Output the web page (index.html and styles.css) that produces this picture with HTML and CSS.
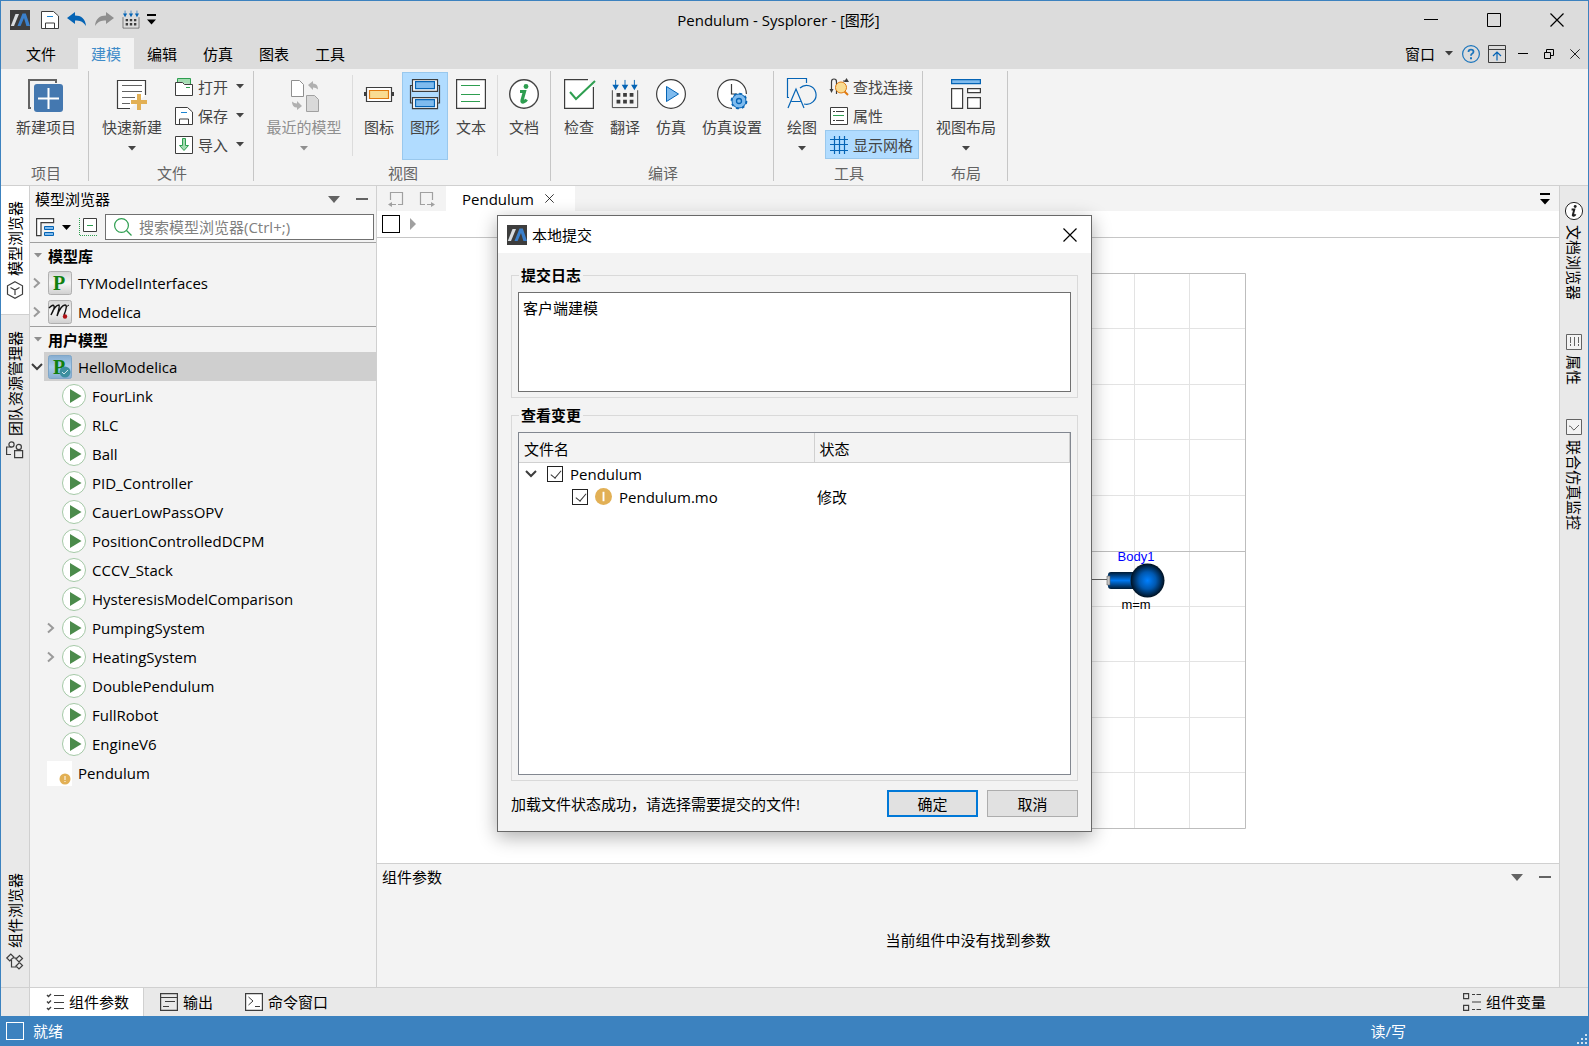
FILE: index.html
```html
<!DOCTYPE html>
<html lang="zh-CN">
<head>
<meta charset="utf-8">
<title>Pendulum - Sysplorer - [图形]</title>
<link rel="stylesheet" href="styles.css">
</head>
<body>
<svg class="defs" aria-hidden="true">
  <defs>
    <linearGradient id="g-key" x1="0" y1="0" x2="0" y2="1"><stop offset="0" stop-color="#d6d6d6"/><stop offset=".5" stop-color="#f4f4f4"/><stop offset="1" stop-color="#cfcfcf"/></linearGradient>
    <linearGradient id="g-keyblue" x1="0" y1="0" x2="0" y2="1"><stop offset="0" stop-color="#86add0"/><stop offset=".5" stop-color="#a9cdec"/><stop offset="1" stop-color="#86add0"/></linearGradient>
    <linearGradient id="g-rod" x1="0" y1="0" x2="0" y2="1"><stop offset="0" stop-color="#001a33"/><stop offset=".5" stop-color="#0078f0"/><stop offset="1" stop-color="#001a33"/></linearGradient>
    <radialGradient id="g-ball"><stop offset="0" stop-color="#0080ff"/><stop offset=".5" stop-color="#0058b0"/><stop offset="1" stop-color="#00101f"/></radialGradient>
  </defs>
  <symbol id="i-logo" viewBox="0 0 20 20"><path fill="#3d3d3d" d="M0 0h20v20H0z"/><path fill="#d9dde0" d="M5.500 4H9L4 16H0.800z"/><path fill="#3a80cc" d="M12.500 3.500h3.300L20 16h-3.600L14 8l-3.400 8H7.500z"/></symbol>
  <symbol id="i-save" viewBox="0 0 18 18"><path fill="#fff" stroke="#3d3d3d" d="M.5 .5h12l5 4.500v12.500H.5z"/><path fill="none" stroke="#3d3d3d" d="M4.500 17v-5h9v5"/><path stroke="#1b83d0" d="M6 5.500h6"/></symbol>
  <symbol id="i-undo" viewBox="0 0 20 16"><path fill="currentColor" d="M0 6L8 0v3.500c6 0 10.500 3 11 10.500C16 9.500 13 8.500 8 8.500V12z"/></symbol>
  <symbol id="i-build" viewBox="0 0 30 32"><path fill="none" stroke="#3d3d3d" d="M1.500 12v18.500h27V12"/><path stroke="#0564b5" d="M5 1v6M15 1v6M25 1v6"/><path fill="#0564b5" d="M1.500 6h7L5 12zM11.500 6h7L15 12zM21.500 6h7L25 12z"/><path fill="#3d3d3d" d="M6 15h4v4H6zM13 15h4v4h-4zM20 15h4v4h-4zM6 22h4v4H6zM13 22h4v4h-4zM20 22h4v4h-4z"/></symbol>
  <symbol id="i-down" viewBox="0 0 8 5"><path fill="currentColor" d="M0 0h8L4 4.500z"/></symbol>
  <symbol id="i-more" viewBox="0 0 10 12"><path fill="currentColor" d="M0 0h10v2H0zM0 6h10l-5 5.500z"/></symbol>
  <symbol id="i-minus" viewBox="0 0 12 12"><path fill="currentColor" d="M0 5h12v2H0z"/></symbol>
  <symbol id="i-x" viewBox="0 0 14 14"><path fill="none" stroke="currentColor" stroke-width="1.200" d="M.5 .5l13 13M13.500 .5l-13 13"/></symbol>
  <symbol id="i-right" viewBox="0 0 8 12"><path fill="none" stroke="currentColor" stroke-width="2" d="M1 1.500L6 6l-5 4.500"/></symbol>
  <symbol id="i-open" viewBox="0 0 12 8"><path fill="none" stroke="currentColor" stroke-width="2" d="M1 1l5 5 5-5"/></symbol>
  <symbol id="i-run" viewBox="0 0 24 24"><circle cx="12" cy="12" r="11.500" fill="#fff" stroke="#a4c8a6"/><path fill="#4b8b4b" d="M8 5l11.500 7L8 19z"/></symbol>
  <symbol id="i-warn" viewBox="0 0 18 18"><circle cx="9" cy="9" r="9" fill="#e2b055"/><path fill="#fff" d="M8 4h2v10H8z"/></symbol>
  <symbol id="i-info" viewBox="0 0 30 30"><circle cx="15" cy="15" r="14.300" fill="#fff" stroke="currentColor" stroke-width="1.400"/><circle cx="17" cy="7.500" r="2.400" fill="var(--mark)"/><path fill="none" stroke="var(--mark)" stroke-width="3.200" d="M11 12.500h4.500L13 21.500q-.4 1.800 1.500 1.500 2-.5 3-2.500"/></symbol>
</svg>

<div class="window">
  <header class="titlebar">
    <div class="quick">
      <svg class="logo"><use href="#i-logo"/></svg>
      <button class="quick-btn" aria-label="保存"><svg width="18" height="18"><use href="#i-save"/></svg></button>
      <button class="quick-btn blue" aria-label="撤销"><svg width="20" height="16"><use href="#i-undo"/></svg></button>
      <button class="quick-btn gray" aria-label="重做"><svg class="flip" width="20" height="16"><use href="#i-undo"/></svg></button>
      <button class="quick-btn" aria-label="翻译"><svg width="18" height="19"><use href="#i-build"/></svg></button>
      <button class="quick-btn slim" aria-label="更多"><svg width="9" height="11"><use href="#i-more"/></svg></button>
    </div>
    <h1 class="caption">Pendulum - Sysplorer - [图形]</h1>
    <div class="win-controls">
      <button aria-label="最小化"><svg width="14" height="14"><path fill="#000" d="M0 6h14v1H0z"/></svg></button>
      <button aria-label="最大化"><svg width="14" height="14"><path fill="none" stroke="#000" d="M.5 .5h13v13H.5z"/></svg></button>
      <button aria-label="关闭"><svg width="14" height="14"><use href="#i-x"/></svg></button>
    </div>
  </header>

  <nav class="menubar">
    <button class="menu file">文件</button>
    <button class="menu active">建模</button>
    <button class="menu">编辑</button>
    <button class="menu">仿真</button>
    <button class="menu">图表</button>
    <button class="menu">工具</button>
    <div class="menu-right">
      <button class="window-menu">窗口<svg class="drop"><use href="#i-down"/></svg></button>
      <button class="mini" aria-label="帮助"><svg width="18" height="18"><circle cx="9" cy="9" r="8.400" fill="none" stroke="#1b75bc" stroke-width="1.200"/><path fill="none" stroke="#1b75bc" stroke-width="1.800" d="M6.500 7q0-2.300 2.500-2.300t2.500 2.100Q11.500 8 10 8.800q-1 .5-1 2"/><path fill="#1b75bc" d="M8 12.300h2v2H8z"/></svg></button>
      <button class="mini" aria-label="折叠功能区"><svg width="18" height="18"><path fill="none" stroke="#3d3d3d" d="M.5 .5h17v17H.5zM.5 4.500h17"/><path fill="none" stroke="#0564b5" stroke-width="1.200" d="M9 15.500V8M5 11l4-4 4 4"/></svg></button>
      <button class="mini" aria-label="最小化子窗口"><svg width="10" height="10"><path d="M0 4h10v1H0z"/></svg></button>
      <button class="mini" aria-label="还原子窗口"><svg width="10" height="10"><path fill="none" stroke="#000" d="M.5 3.500h6v6h-6zM2.500 3V.5h7v6H7"/></svg></button>
      <button class="mini" aria-label="关闭子窗口"><svg width="10" height="10"><use href="#i-x"/></svg></button>
    </div>
  </nav>

  <section class="ribbon">
    <div class="group">
      <div class="tools">
        <button class="tool wide"><svg class="pic"><path fill="none" stroke="#636363" stroke-width="2" d="M-2 29V1h27v3M-3 29h3"/><rect x="3" y="5" width="29" height="28" rx="3" fill="#4478b0"/><path fill="#fff" d="M16.500 9h2v9.500H28v2h-9.500V30h-2v-9.500H7v-2h9.500z"/></svg>新建项目</button>
      </div>
      <h2>项目</h2>
    </div>
    <div class="group">
      <div class="tools">
        <button class="tool wide"><svg class="pic"><path fill="#fff" stroke="#3d3d3d" stroke-width="1.200" d="M28.500 16V1.500h-28v28H13"/><path stroke="#636363" d="M5 6.500h20M5 12.500h20M5 18.500h13M5 24.500h8"/><path fill="#e2b055" d="M20 15h4v6h6v4h-6v6h-4v-6h-6v-4h6z"/></svg>快速新建<svg class="drop"><use href="#i-down"/></svg></button>
        <div class="stack">
          <button class="row"><svg class="pic18"><path fill="#a3dcb1" stroke="#2e9e50" d="M2.500 5V.5h13V6"/><path fill="#fff" stroke="#3d3d3d" d="M.5 4.500h7l2 2h8v11H.5z"/><path stroke="#2e9e50" d="M11 9.500h4"/></svg>打开<svg class="drop"><use href="#i-down"/></svg></button>
          <button class="row"><svg class="pic18"><use href="#i-save"/></svg>保存<svg class="drop"><use href="#i-down"/></svg></button>
          <button class="row"><svg class="pic18"><path fill="#fff" stroke="#3d3d3d" d="M.5 .5h17v17H.5z"/><path fill="#a3dcb1" stroke="#2e9e50" d="M7.500 2.500h3v7h3L9 14.500 4.500 9.500h3z"/></svg>导入<svg class="drop"><use href="#i-down"/></svg></button>
        </div>
      </div>
      <h2>文件</h2>
    </div>
    <div class="group">
      <div class="tools">
        <button class="tool recent" disabled><svg class="pic"><path fill="#fff" stroke="#8f8f8f" d="M2.500 1.500h8l4 4v12h-12z"/><path fill="#d9d9d9" stroke="#a0a0a0" d="M17.500 16.500h8l4 4v12h-12z"/><path fill="#b0b0b0" d="M19 6l5-4v2.500q5 0 5 6-2-2-5-2V11zM13 27l-5 4v-2.500q-5 0-5-6 2 2 5 2V22z"/></svg>最近的模型<svg class="drop"><use href="#i-down"/></svg></button>
        <span class="rule"></span>
        <button class="tool"><svg class="pic"><path fill="#3d3d3d" d="M0 13h3v4H0zM27 13h3v4h-3z"/><path fill="#fff" stroke="#3d3d3d" stroke-width="1.200" d="M2.500 8.500h25v14h-25z"/><path fill="#f9dc92" stroke="#e07a10" stroke-width="1.200" d="M5.500 11.500h19v8h-19z"/></svg>图标</button>
        <button class="tool on"><svg class="pic"><path fill="none" stroke="#3d3d3d" stroke-width="1.200" d="M3 6.500H.5V24H3M27 6.500h2.500V24H27"/><path fill="#fff" stroke="#3d3d3d" stroke-width="1.200" d="M2.500 .6h25v11.800h-25zM2.500 18.600h25v11h-25z"/><path fill="#7fbbee" stroke="#0564b5" stroke-width="1.200" d="M5.500 2.600h19v7h-19zM5.500 20.600h19v7h-19z"/></svg>图形</button>
        <button class="tool"><svg class="pic"><path fill="#fff" stroke="#3d3d3d" stroke-width="1.200" d="M.6 .6h28.800v28.800H.6z"/><path stroke="#2e9e50" d="M5 6.500h19M5 15.500h19M5 22.500h19"/></svg>文本</button>
        <span class="rule"></span>
        <button class="tool"><svg class="pic green-mark"><use href="#i-info"/></svg>文档</button>
      </div>
      <h2>视图</h2>
    </div>
    <div class="group">
      <div class="tools">
        <button class="tool"><svg class="pic"><path fill="#fff" stroke="#3d3d3d" stroke-width="1.200" d="M24 .6H.6v28.800h28.800V8"/><path fill="none" stroke="#2e9e50" stroke-width="2" d="M6 13l6 7L31 2"/></svg>检查</button>
        <button class="tool"><svg class="pic"><use href="#i-build"/></svg>翻译</button>
        <button class="tool"><svg class="pic"><circle cx="15" cy="15" r="14.400" fill="#fff" stroke="#3d3d3d" stroke-width="1.200"/><path fill="#7fbbee" stroke="#0564b5" d="M10.500 7.500v15l12-7.500z"/></svg>仿真</button>
        <button class="tool wide"><svg class="pic"><path fill="#fff" stroke="#3d3d3d" stroke-width="1.200" d="M15 29.400A14.400 14.400 0 1 1 29.400 15"/><path fill="none" stroke="#3d3d3d" stroke-width="1.200" d="M14.500 5v10H20"/><circle cx="22" cy="22" r="7" fill="#7fbbee" stroke="#0564b5"/><circle cx="22" cy="22" r="7.600" fill="none" stroke="#0564b5" stroke-width="1.500" stroke-dasharray="3 2.970"/><circle cx="22" cy="22" r="2.500" fill="none" stroke="#0564b5" stroke-width="1.300"/></svg>仿真设置</button>
      </div>
      <h2>编译</h2>
    </div>
    <div class="group">
      <div class="tools">
        <button class="tool"><svg class="pic"><path fill="none" stroke="#0564b5" stroke-width="1.200" d="M2 18.500H.5V-.5h19V4M1 29l8-19 8 19M4.500 22.500h9M13 9a9.500 9.500 0 1 1 4 16"/></svg>绘图<svg class="drop"><use href="#i-down"/></svg></button>
        <div class="stack">
          <button class="row"><svg class="pic18"><path fill="none" stroke="#3d3d3d" stroke-width="1.200" d="M1.500 12V4q0-3 2.500-3t2.500 3v12M13 3h4"/><path fill="#3d3d3d" d="M-.5 11h4l-2 4zM14 4h5l-2.500-4z"/><path stroke="#e07a10" stroke-width="2" d="M14 13l4 4"/><circle cx="11" cy="9.500" r="5.500" fill="#f9dc92" stroke="#e07a10"/></svg>查找连接</button>
          <button class="row"><svg class="pic18"><path fill="#fff" stroke="#3d3d3d" d="M.5 .5h17v17H.5z"/><path stroke="#3d3d3d" d="M3 4.500h2M6 4.500h8M3 13.500h2M6 13.500h8"/><path stroke="#2e9e50" d="M3 8.500h11"/></svg>属性</button>
          <button class="row on"><svg class="pic18"><path stroke="#0564b5" stroke-width="1.200" d="M4.500 0v18M9.500 0v18M14.500 0v18M0 3.500h18M0 8.500h18M0 14.500h18"/></svg>显示网格</button>
        </div>
      </div>
      <h2>工具</h2>
    </div>
    <div class="group">
      <div class="tools">
        <button class="tool wide"><svg class="pic"><path fill="#7fbbee" stroke="#0564b5" stroke-width="1.200" d="M.6 .6h28.800v4H.6z"/><path fill="#fff" stroke="#3d3d3d" stroke-width="1.200" d="M.6 9.600h11v19.800H.6zM16.600 9.600h12.800v4H16.600zM16.600 18.600h12.800v10.800H16.600z"/></svg>视图布局<svg class="drop"><use href="#i-down"/></svg></button>
      </div>
      <h2>布局</h2>
    </div>
  </section>

  <div class="workspace">
    <nav class="strip left">
      <button class="side-tab active"><svg width="18" height="18"><path fill="none" stroke="#3d3d3d" stroke-width="1.200" d="M9 .8l7.500 4v8.400L9 17.200l-7.500-4V4.800zM4.500 6.500L9 9l4.500-2.500M9 9v5"/></svg><span>模型浏览器</span></button>
      <button class="side-tab"><svg width="18" height="18"><path fill="none" stroke="#3d3d3d" stroke-width="1.200" d="M5 13.500H.6V6h5M8.600 9.600h8v7h-8z"/><circle cx="5.500" cy="3.500" r="2.600" fill="none" stroke="#3d3d3d" stroke-width="1.200"/><circle cx="12.800" cy="6" r="2.600" fill="none" stroke="#3d3d3d" stroke-width="1.200"/></svg><span>团队资源管理器</span></button>
      <button class="side-tab last"><svg width="18" height="18"><path fill="none" stroke="#3d3d3d" stroke-width="1.200" d="M.8 5l4-4 3 3-4 4zM10 6l3.500-3.500 3 3L13 9zM10 13l3.500-3.500 3 3L13 16zM7 5h4M5.500 7v7H11"/></svg><span>组件浏览器</span></button>
    </nav>

    <aside class="browser">
      <div class="panel-head">
        <h2>模型浏览器</h2>
        <button aria-label="选项"><svg width="12" height="7"><path fill="#636363" d="M0 0h12L6 7z"/></svg></button>
        <button aria-label="收起"><svg width="12" height="12"><use href="#i-minus"/></svg></button>
      </div>
      <div class="search-bar">
        <button class="view-btn" aria-label="视图"><svg width="18" height="18"><path fill="#fff" stroke="#3d3d3d" stroke-width="1.200" d="M.6 .6h17v4H5v13H.6z"/><path fill="#7fbbee" stroke="#0564b5" d="M8.500 8.500h9v3h-9zM8.500 14.500h9v3h-9z"/></svg><svg width="9" height="5"><path d="M0 0h9L4.500 5z"/></svg></button>
        <button aria-label="全部折叠"><svg width="18" height="18"><path fill="none" stroke="#2e9e50" stroke-dasharray="1 1" d="M.5 0v17.500H18"/><path fill="#fff" stroke="#3d3d3d" d="M4.500 .5h13v13h-13z"/><path stroke="#2e9e50" d="M8 7.500h6"/></svg></button>
        <label class="search"><svg width="18" height="18"><circle cx="7.500" cy="7.500" r="6.900" fill="none" stroke="#2e9e50" stroke-width="1.200"/><path stroke="#2e9e50" stroke-width="1.300" d="M12.500 12.500l5 5"/></svg><input type="text" placeholder="搜索模型浏览器(Ctrl+;)" aria-label="搜索模型浏览器"></label>
      </div>
      <section class="tree">
        <h3><svg class="drop"><use href="#i-down"/></svg>模型库</h3>
        <ul>
          <li><span class="twist"><svg width="8" height="12"><use href="#i-right"/></svg></span><svg class="node"><rect x=".5" y=".5" width="23" height="23" rx="2" fill="url(#g-key)" stroke="#b0b0b0"/><text class="p-mark" x="11" y="19">P</text></svg>TYModelInterfaces</li>
          <li><span class="twist"><svg width="8" height="12"><use href="#i-right"/></svg></span><svg class="node"><rect x=".5" y=".5" width="23" height="23" rx="2" fill="url(#g-key)" stroke="#b0b0b0"/><path fill="none" stroke="#111" stroke-width="1.400" d="M1 8q4-4 5-2T3 15q4-10 8-10 1 1-2 11 4-11 8-11 3 0-1 10"/><path fill="none" stroke="#111" d="M18 7l3-2"/><circle cx="17" cy="16.500" r="2.200" fill="#b01217"/></svg>Modelica</li>
        </ul>
      </section>
      <section class="tree">
        <h3><svg class="drop"><use href="#i-down"/></svg>用户模型</h3>
        <ul>
          <li class="selected"><span class="twist dark"><svg width="12" height="8"><use href="#i-open"/></svg></span><svg class="node"><rect x=".5" y=".5" width="23" height="23" rx="2" fill="url(#g-keyblue)" stroke="#7fa6c8"/><text class="p-mark" x="11" y="19">P</text><circle cx="17" cy="17" r="5.500" fill="#3c8f9f"/><path fill="none" stroke="#cfe6ea" d="M14 17l2 2 4-4"/></svg>HelloModelica</li>
          <li class="sub"><span class="twist"></span><svg class="node"><use href="#i-run"/></svg>FourLink</li>
          <li class="sub"><span class="twist"></span><svg class="node"><use href="#i-run"/></svg>RLC</li>
          <li class="sub"><span class="twist"></span><svg class="node"><use href="#i-run"/></svg>Ball</li>
          <li class="sub"><span class="twist"></span><svg class="node"><use href="#i-run"/></svg>PID_Controller</li>
          <li class="sub"><span class="twist"></span><svg class="node"><use href="#i-run"/></svg>CauerLowPassOPV</li>
          <li class="sub"><span class="twist"></span><svg class="node"><use href="#i-run"/></svg>PositionControlledDCPM</li>
          <li class="sub"><span class="twist"></span><svg class="node"><use href="#i-run"/></svg>CCCV_Stack</li>
          <li class="sub"><span class="twist"></span><svg class="node"><use href="#i-run"/></svg>HysteresisModelComparison</li>
          <li class="sub"><span class="twist"><svg width="8" height="12"><use href="#i-right"/></svg></span><svg class="node"><use href="#i-run"/></svg>PumpingSystem</li>
          <li class="sub"><span class="twist"><svg width="8" height="12"><use href="#i-right"/></svg></span><svg class="node"><use href="#i-run"/></svg>HeatingSystem</li>
          <li class="sub"><span class="twist"></span><svg class="node"><use href="#i-run"/></svg>DoublePendulum</li>
          <li class="sub"><span class="twist"></span><svg class="node"><use href="#i-run"/></svg>FullRobot</li>
          <li class="sub"><span class="twist"></span><svg class="node"><use href="#i-run"/></svg>EngineV6</li>
          <li><span class="twist"></span><svg class="node"><path fill="#fff" d="M-1 0h25v25H-1z"/><circle cx="17" cy="18" r="5.500" fill="#e2b055"/><path fill="#fff" d="M16.500 15h1v4h-1zM16.500 20h1v1h-1z"/></svg>Pendulum</li>
        </ul>
      </section>
    </aside>

    <main class="editor">
      <div class="doc-tabs">
        <div class="nav-btns">
          <button aria-label="后退"><svg width="16" height="16"><path fill="none" stroke="#a0a0a0" stroke-width="1.200" d="M2.500 9V1.500h12v12H10M8 13.500H2"/><path fill="#a0a0a0" d="M0 13.500l4-2.500v5z"/></svg></button>
          <button aria-label="前进"><svg width="16" height="16"><path fill="none" stroke="#a0a0a0" stroke-width="1.200" d="M13.500 9V1.500h-12v12H6M8 13.500h6"/><path fill="#a0a0a0" d="M16 13.500L12 11v5z"/></svg></button>
        </div>
        <div class="doc-tab">Pendulum<button aria-label="关闭标签"><svg width="9" height="9"><use href="#i-x"/></svg></button></div>
        <button class="all-tabs" aria-label="全部标签"><svg width="10" height="12"><use href="#i-more"/></svg></button>
      </div>
      <div class="crumbs"><span class="box"></span><svg width="6" height="12"><path fill="#a0a0a0" d="M0 0v12l6-6z"/></svg></div>
      <div class="canvas">
        <svg class="sheet" width="556" height="556">
          <path fill="none" stroke="#e3e3e3" d="M55.500 0v556M111.500 0v556M166.500 0v556M222.500 0v556M333.500 0v556M388.500 0v556M444.500 0v556M499.500 0v556M0 55.500h556M0 111.500h556M0 166.500h556M0 222.500h556M0 333.500h556M0 388.500h556M0 444.500h556M0 499.500h556"/>
          <path fill="none" stroke="#bdbdbd" d="M.5 .5h555v555H.5zM277.500 0v556M0 278.500h556"/>
          <path stroke="#636363" d="M360 306.500h58"/>
          <rect x="418" y="299" width="32" height="17" rx="3" fill="url(#g-rod)"/>
          <path fill="#c8c8c8" stroke="#636363" stroke-width=".6" d="M417 303h3v9h-3z"/>
          <circle cx="457.500" cy="307.500" r="17" fill="url(#g-ball)"/>
          <text class="part blue-text" x="446" y="288">Body1</text>
          <text class="part" x="446" y="336">m=m</text>
        </svg>
      </div>
      <section class="params">
        <div class="panel-head">
          <h2>组件参数</h2>
          <button aria-label="选项"><svg width="12" height="7"><path fill="#636363" d="M0 0h12L6 7z"/></svg></button>
          <button aria-label="收起"><svg width="12" height="12"><use href="#i-minus"/></svg></button>
        </div>
        <p>当前组件中没有找到参数</p>
      </section>
    </main>

    <nav class="strip right">
      <button class="side-tab"><svg class="dark-mark" width="18" height="18"><use href="#i-info"/></svg><span>文档浏览器</span></button>
      <button class="side-tab"><svg width="16" height="16"><path fill="#f3f3f3" stroke="#636363" d="M.5 .5h15v15H.5z"/><path stroke="#636363" d="M4.500 3v6M4.500 10v2M8.500 3v9M12.500 3v6M12.500 10v2"/></svg><span>属性</span></button>
      <button class="side-tab"><svg width="16" height="16"><path fill="#f3f3f3" stroke="#636363" d="M.5 .5h15v15H.5z"/><path fill="none" stroke="#636363" d="M3 7q2 0 3 2t2 2l5-5"/></svg><span>联合仿真监控</span></button>
    </nav>
  </div>

  <nav class="bottom-tabs">
    <span class="corner"></span>
    <button class="btab active"><svg width="18" height="18"><path stroke="#3d3d3d" stroke-width="1.200" d="M8 2.500h10M8 9.500h10M8 15.500h10"/><path fill="none" stroke="#3d3d3d" stroke-width="1.400" d="M1 2l1.500 1.500L5 1M1 8.500L2.500 10 5 7.500M1 15l1.500 1.500L5 14"/></svg>组件参数</button>
    <button class="btab"><svg width="18" height="18"><path fill="none" stroke="#3d3d3d" stroke-width="1.200" d="M.6 .6h16.800v16.800H.6zM1 4.500h16M5 8.500h10M3 13.500h6"/></svg>输出</button>
    <button class="btab"><svg width="18" height="18"><path fill="#fff" stroke="#3d3d3d" stroke-width="1.200" d="M.6 .6h16.800v16.800H.6z"/><path fill="none" stroke="#3d3d3d" d="M3.500 4l4.500 4-4.500 4M10 13.500h5"/></svg>命令窗口</button>
    <button class="btab end"><svg width="18" height="18"><path fill="none" stroke="#3d3d3d" stroke-width="1.200" d="M.6 .6h5v5h-5zM.6 12.400h5v5h-5zM9 1.500h3M13.500 1.500H18M9 9h9M9 16.500h3M13.500 16.500H18"/></svg>组件变量</button>
  </nav>

  <footer class="status">
    <span class="status-box"></span>
    <span class="ready">就绪</span>
    <span class="mode">读/写</span>
    <svg class="grip" width="12" height="12"><path fill="#d3e3f1" d="M9 0h2v2H9zM9 4h2v2H9zM9 8h2v2H9zM5 4h2v2H5zM5 8h2v2H5zM1 8h2v2H1z"/></svg>
  </footer>

  <div class="overlay">
    <form class="dialog" role="dialog" aria-labelledby="dlg-title">
      <header>
        <svg class="logo"><use href="#i-logo"/></svg>
        <h2 id="dlg-title">本地提交</h2>
        <button type="button" aria-label="关闭"><svg width="14" height="14"><use href="#i-x"/></svg></button>
      </header>
      <div class="dialog-body">
        <fieldset>
          <legend>提交日志</legend>
          <textarea aria-label="提交日志">客户端建模</textarea>
        </fieldset>
        <fieldset>
          <legend>查看变更</legend>
          <div class="changes">
            <table>
              <thead><tr><th class="name-col">文件名</th><th>状态</th></tr></thead>
              <tbody>
                <tr><td><div class="file"><svg class="fold" width="12" height="8"><use href="#i-open"/></svg><label><input type="checkbox" checked>Pendulum</label></div></td><td></td></tr>
                <tr><td><div class="file child"><label><input type="checkbox" checked><svg width="17" height="17"><use href="#i-warn"/></svg>Pendulum.mo</label></div></td><td>修改</td></tr>
              </tbody>
            </table>
          </div>
        </fieldset>
        <div class="actions">
          <p>加载文件状态成功，请选择需要提交的文件!</p>
          <button type="button" class="push primary">确定</button>
          <button type="button" class="push">取消</button>
        </div>
      </div>
    </form>
  </div>
</div>
</body>
</html>
```
FILE: styles.css
```css
:root {
  --blue: #3c82bf;
  --panel: #f3f3f3;
  --strip: #e9e9e9;
  --line: #d0d0d0;
  --ink: #3d3d3d;
  --hot: #b1dcff;
  --hot-line: #99c8ed;
}

* { box-sizing: border-box; }

body {
  margin: 0;
  color: #000;
  font: 15px/20px "Open Sans", "Noto Sans CJK SC", sans-serif;
}

button, input, textarea { font: inherit; color: inherit; }

button {
  display: flex;
  align-items: center;
  justify-content: center;
  padding: 0;
  border: 0;
  background: none;
  white-space: nowrap;
}

h1, h2, h3, p, ul { margin: 0; padding: 0; font-size: 15px; font-weight: 400; }
ul { list-style: none; }
svg { display: block; flex: none; overflow: visible; }

.defs { position: absolute; width: 0; height: 0; }
.drop { width: 8px; height: 5px; }
.logo { width: 20px; height: 20px; }
.flip { transform: scaleX(-1); }
.green-mark { --mark: #2e9e50; }
.dark-mark { --mark: #222; }

.window {
  position: relative;
  display: flex;
  flex-direction: column;
  min-height: 100vh;
  border: 1px solid var(--blue);
  border-bottom: 0;
  background: var(--panel);
}

/* Title bar */
.titlebar { display: flex; align-items: center; height: 37px; background: #dcdcdc; }
.quick { display: flex; align-items: center; padding-left: 9px; }
.quick .logo { margin-right: 6px; }
.quick-btn { width: 27px; height: 24px; }
.quick-btn.slim { width: 14px; }
.blue { color: #0564b5; }
.gray { color: #8f8f8f; }
.caption { flex: 1; text-align: center; }
.win-controls { display: flex; }
.win-controls button { width: 63px; height: 36px; }

/* Menu bar */
.menubar { display: flex; height: 31px; background: #dcdcdc; }
.menu { width: 56px; }
.menu.file { width: 77px; }
.menu.active { background: var(--panel); color: #3f8cc9; }
.menu-right { display: flex; align-items: center; margin-left: auto; }
.window-menu { gap: 10px; margin-right: 5px; }
.window-menu .drop { color: var(--ink); }
.mini { width: 26px; height: 26px; }

/* Ribbon */
.ribbon {
  display: flex;
  padding: 2px 0 4px;
  border-bottom: 1px solid var(--line);
  color: #444;
}
.group { padding: 1px 3px 0 5px; border-right: 1px solid #c6c6c6; }
.group:first-child { padding-right: 4px; padding-left: 7px; }
.group h2 { padding-top: 5px; color: #636363; line-height: 16px; text-align: center; }
.tools { display: flex; height: 88px; }
.tool {
  flex-direction: column;
  justify-content: flex-start;
  width: 46px;
  height: 88px;
  padding-top: 6px;
  border: 1px solid transparent;
}
.tool.wide { width: 76px; }
.tool.recent { width: 90px; color: #8f8f8f; }
.tool .pic { margin-bottom: 8px; }
.tool .drop { margin-top: 9px; }
.pic { width: 30px; height: 30px; }
.pic18 { width: 18px; height: 18px; }
.rule { width: 1px; height: 81px; margin: 3px 3px 0; background: #dcdcdc; }
.stack { display: flex; flex-direction: column; align-items: stretch; }
.row {
  justify-content: flex-start;
  gap: 5px;
  height: 29px;
  padding: 0 5px 0 4px;
  border: 1px solid transparent;
}
.row .drop { margin-left: 3px; }
.on { border-color: var(--hot-line); background: var(--hot); }

/* Work area */
.workspace { display: flex; flex: 1; }
.strip { display: flex; flex-direction: column; width: 29px; background: var(--strip); }
.strip.left { border-right: 1px solid var(--line); }
.strip.right { gap: 34px; padding-top: 16px; border-left: 1px solid var(--line); }
.side-tab { flex-direction: column; gap: 5px; width: 28px; }
.side-tab span { line-height: 20px; writing-mode: vertical-rl; text-orientation: sideways; }
.left .side-tab { flex-direction: column-reverse; padding: 16px 0; }
.left .side-tab span { transform: rotate(180deg); }
.left .side-tab.active { height: 129px; border-bottom: 1px solid var(--line); background: #fff; }
.left .side-tab.last { margin-top: auto; }

.browser { width: 347px; border-right: 1px solid var(--line); }
.panel-head { display: flex; align-items: center; gap: 16px; height: 26px; padding: 0 8px 0 5px; color: #636363; }
.panel-head h2 { flex: 1; color: #000; }
.search-bar {
  display: flex;
  align-items: center;
  gap: 8px;
  padding: 2px 2px 2px 6px;
}
.view-btn { gap: 8px; }
.search {
  display: flex;
  flex: 1;
  align-items: center;
  gap: 7px;
  height: 26px;
  padding-left: 8px;
  border: 1px solid #707070;
  background: #fff;
}
.search input { flex: 1; min-width: 0; padding: 0; border: 0; outline: 0; background: none; }
.search input::placeholder { color: #808080; opacity: 1; }

.tree { border-top: 1px solid #a0a0a0; }
.tree h3 { display: flex; align-items: center; gap: 6px; height: 25px; padding-left: 4px; font-weight: 700; }
.tree .drop { color: #8f8f8f; }
.tree li { display: flex; align-items: center; height: 29px; }
.tree .sub { padding-left: 14px; }
.tree .selected { background: linear-gradient(90deg, transparent 14px, #cfcfcf 14px); }
.twist { display: flex; justify-content: center; width: 14px; margin-right: 4px; color: #9a9a9a; }
.twist.dark { color: var(--ink); }
.node { width: 24px; height: 24px; margin-right: 6px; }
.p-mark { fill: #108010; font: 700 20px "Liberation Serif", serif; text-anchor: middle; }

.editor { display: flex; flex: 1; flex-direction: column; min-width: 0; }
.doc-tabs { display: flex; height: 25px; }
.nav-btns { display: flex; align-items: center; gap: 15px; width: 69px; padding-left: 11px; }
.doc-tab { display: flex; align-items: center; gap: 11px; width: 129px; padding-left: 16px; background: #fff; }
.all-tabs { margin: 0 9px 0 auto; }
.crumbs { display: flex; align-items: center; gap: 10px; height: 27px; padding-left: 5px; border-bottom: 1px solid #c6c6c6; background: #fff; }
.box { width: 18px; height: 18px; border: 1px solid #000; }
.canvas { display: flex; flex: 1; align-items: center; justify-content: center; min-height: 556px; background: #fff; }
.part { font: 13px "Liberation Sans", sans-serif; text-anchor: middle; }
.blue-text { fill: #00f; }
.params { height: 124px; border-top: 1px solid var(--line); }
.params p { padding-top: 40px; text-align: center; }

/* Bottom tabs and status bar */
.bottom-tabs { display: flex; height: 29px; border-top: 1px solid var(--line); background: var(--strip); }
.corner { width: 29px; border-right: 1px solid var(--line); }
.btab { gap: 5px; padding: 0 16px; }
.btab.active { padding-right: 14px; border-right: 1px solid var(--line); background: #fff; }
.btab.end { margin-left: auto; padding-right: 42px; }
.status { display: flex; align-items: center; height: 30px; padding-left: 5px; background: var(--blue); color: #fff; }
.status-box { width: 18px; height: 18px; margin-right: 9px; border: 1px solid #fff; }
.mode { margin-left: auto; padding-right: 170px; }
.grip { align-self: flex-end; }

/* Commit dialog */
.overlay { position: absolute; inset: 0; display: grid; place-items: center; }
.dialog {
  width: 595px;
  border: 1px solid #686868;
  background: var(--panel);
  box-shadow: 0 5px 18px rgba(0, 0, 0, .32);
}
.dialog header { display: flex; align-items: center; gap: 5px; height: 37px; padding: 0 14px 0 9px; background: #fff; }
.dialog h2 { flex: 1; }
.dialog-body { padding: 12px 13px 14px; }
fieldset { min-width: 0; margin: 0 0 7px; padding: 7px 6px 5px; border: 1px solid #d9d9d9; }
legend { height: 20px; margin-left: 1px; padding: 0 2px; font-weight: 700; }
textarea {
  display: block;
  width: 100%;
  height: 100px;
  padding: 5px 4px;
  border: 1px solid #707070;
  outline: 0;
  background: #fff;
  resize: none;
}
.changes { height: 343px; border: 1px solid #828790; background: #fff; }
table { width: 100%; border-collapse: collapse; table-layout: fixed; }
th { height: 29px; padding: 3px 5px 0; border-right: 1px solid var(--line); border-bottom: 1px solid var(--line); background: var(--panel); font-weight: 400; text-align: left; }
.name-col { width: 295px; }
td { height: 23px; padding: 0 3px; }
.file, .file label { display: flex; align-items: center; }
.file { gap: 10px; padding-left: 3px; }
.file.child { padding-left: 50px; }
.file label { gap: 7px; }
.fold { color: var(--ink); }
.file input {
  appearance: none;
  width: 16px;
  height: 16px;
  margin: 0;
  border: 1px solid #222;
  background: #fff;
}
.file input:checked::before {
  content: "";
  display: block;
  width: 5px;
  height: 9px;
  margin: 1px 0 0 5px;
  border: solid #333;
  border-width: 0 1px 1px 0;
  transform: rotate(40deg);
}
.actions { display: flex; align-items: center; gap: 9px; padding-top: 2px; }
.actions p { flex: 1; }
.push { width: 91px; height: 27px; border: 1px solid #adadad; background: #e1e1e1; }
.push.primary { border: 2px solid #0078d7; }
```
